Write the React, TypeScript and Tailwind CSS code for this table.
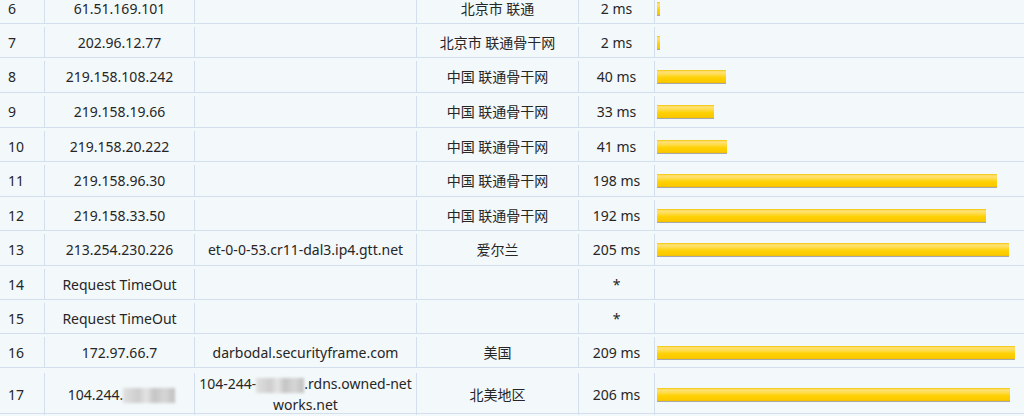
import type { ReactNode } from "react";

type Hop = {
  no: number;
  ip: ReactNode;
  host?: ReactNode;
  geo?: string;
  ms?: number;
  h: string;
};

// 模糊处理的遮挡块（截图里被打码的部分）
function Blur({ w }: { w: string }) {
  return (
    <span
      className={`inline-block h-[15px] align-middle blur-[1.5px] bg-[linear-gradient(to_right,#e0e0e0_0%,#cdcdcd_30%,#e4e4e4_45%,#c4c4c4_60%,#d6d6d6_80%,#bfbfbf_100%)] ${w}`}
    />
  );
}

const hops: Hop[] = [
  { no: 6, ip: "61.51.169.101", geo: "北京市 联通", ms: 2, h: "h-[34px]" },
  { no: 7, ip: "202.96.12.77", geo: "北京市 联通骨干网", ms: 2, h: "h-[34px]" },
  { no: 8, ip: "219.158.108.242", geo: "中国 联通骨干网", ms: 40, h: "h-[35px]" },
  { no: 9, ip: "219.158.19.66", geo: "中国 联通骨干网", ms: 33, h: "h-[35px]" },
  { no: 10, ip: "219.158.20.222", geo: "中国 联通骨干网", ms: 41, h: "h-[34px]" },
  { no: 11, ip: "219.158.96.30", geo: "中国 联通骨干网", ms: 198, h: "h-[35px]" },
  { no: 12, ip: "219.158.33.50", geo: "中国 联通骨干网", ms: 192, h: "h-[34px]" },
  {
    no: 13,
    ip: "213.254.230.226",
    host: "et-0-0-53.cr11-dal3.ip4.gtt.net",
    geo: "爱尔兰",
    ms: 205,
    h: "h-[35px]",
  },
  { no: 14, ip: "Request TimeOut", h: "h-[34px]" },
  { no: 15, ip: "Request TimeOut", h: "h-[34px]" },
  {
    no: 16,
    ip: "172.97.66.7",
    host: "darbodal.securityframe.com",
    geo: "美国",
    ms: 209,
    h: "h-[34px]",
  },
  {
    no: 17,
    ip: (
      <span className="pl-[4px]">
        104.244.
        <Blur w="w-[52px]" />
      </span>
    ),
    host: (
      <span className="block leading-[21px]">
        104-244-
        <Blur w="w-[48px]" />
        .rdns.owned-net
        <br />
        works.net
      </span>
    ),
    geo: "北美地区",
    ms: 206,
    h: "h-[46px] pt-[5px]",
  },
];

const PX_PER_MS = 1.715;

export default function App() {
  return (
    <div className="h-[416px] w-[1024px] overflow-hidden bg-[#f3f8fa] font-['Noto_Sans','Noto_Sans_CJK_SC',sans-serif] text-[14px] text-[#262626]">
      <div className="-mt-[10px]">
        {hops.map((hop) => (
          <div
            key={hop.no}
            className={`grid grid-cols-[45px_150px_222px_162px_76px_1fr] border-b border-[#d4dfee] pt-[3px] ${hop.h}`}
          >
            <div className="flex items-center border-r border-[#d4dfee] pl-[8px]">{hop.no}</div>
            <div className="flex items-center justify-center border-r border-[#d4dfee]">{hop.ip}</div>
            <div className="flex items-center justify-center border-r border-[#d4dfee] text-center">
              {hop.host}
            </div>
            <div className="flex items-center justify-center border-r border-[#d4dfee]">{hop.geo}</div>
            <div className="flex items-center justify-center border-r border-[#d4dfee]">
              {hop.ms !== undefined ? `${hop.ms} ms` : "*"}
            </div>
            <div className="flex items-center pl-[2px]">
              {hop.ms !== undefined && (
                <div
                  className="h-[13px] shadow-[0_1px_0_#a8a8a8] bg-[linear-gradient(to_bottom,#f4c400_0%,#ffe27a_14%,#ffdc4a_35%,#ffd000_60%,#fcca00_88%,#efbe00_100%)]"
                  style={{ width: Math.max(3, Math.round(hop.ms * PX_PER_MS)) }}
                />
              )}
            </div>
          </div>
        ))}
      </div>
    </div>
  );
}
